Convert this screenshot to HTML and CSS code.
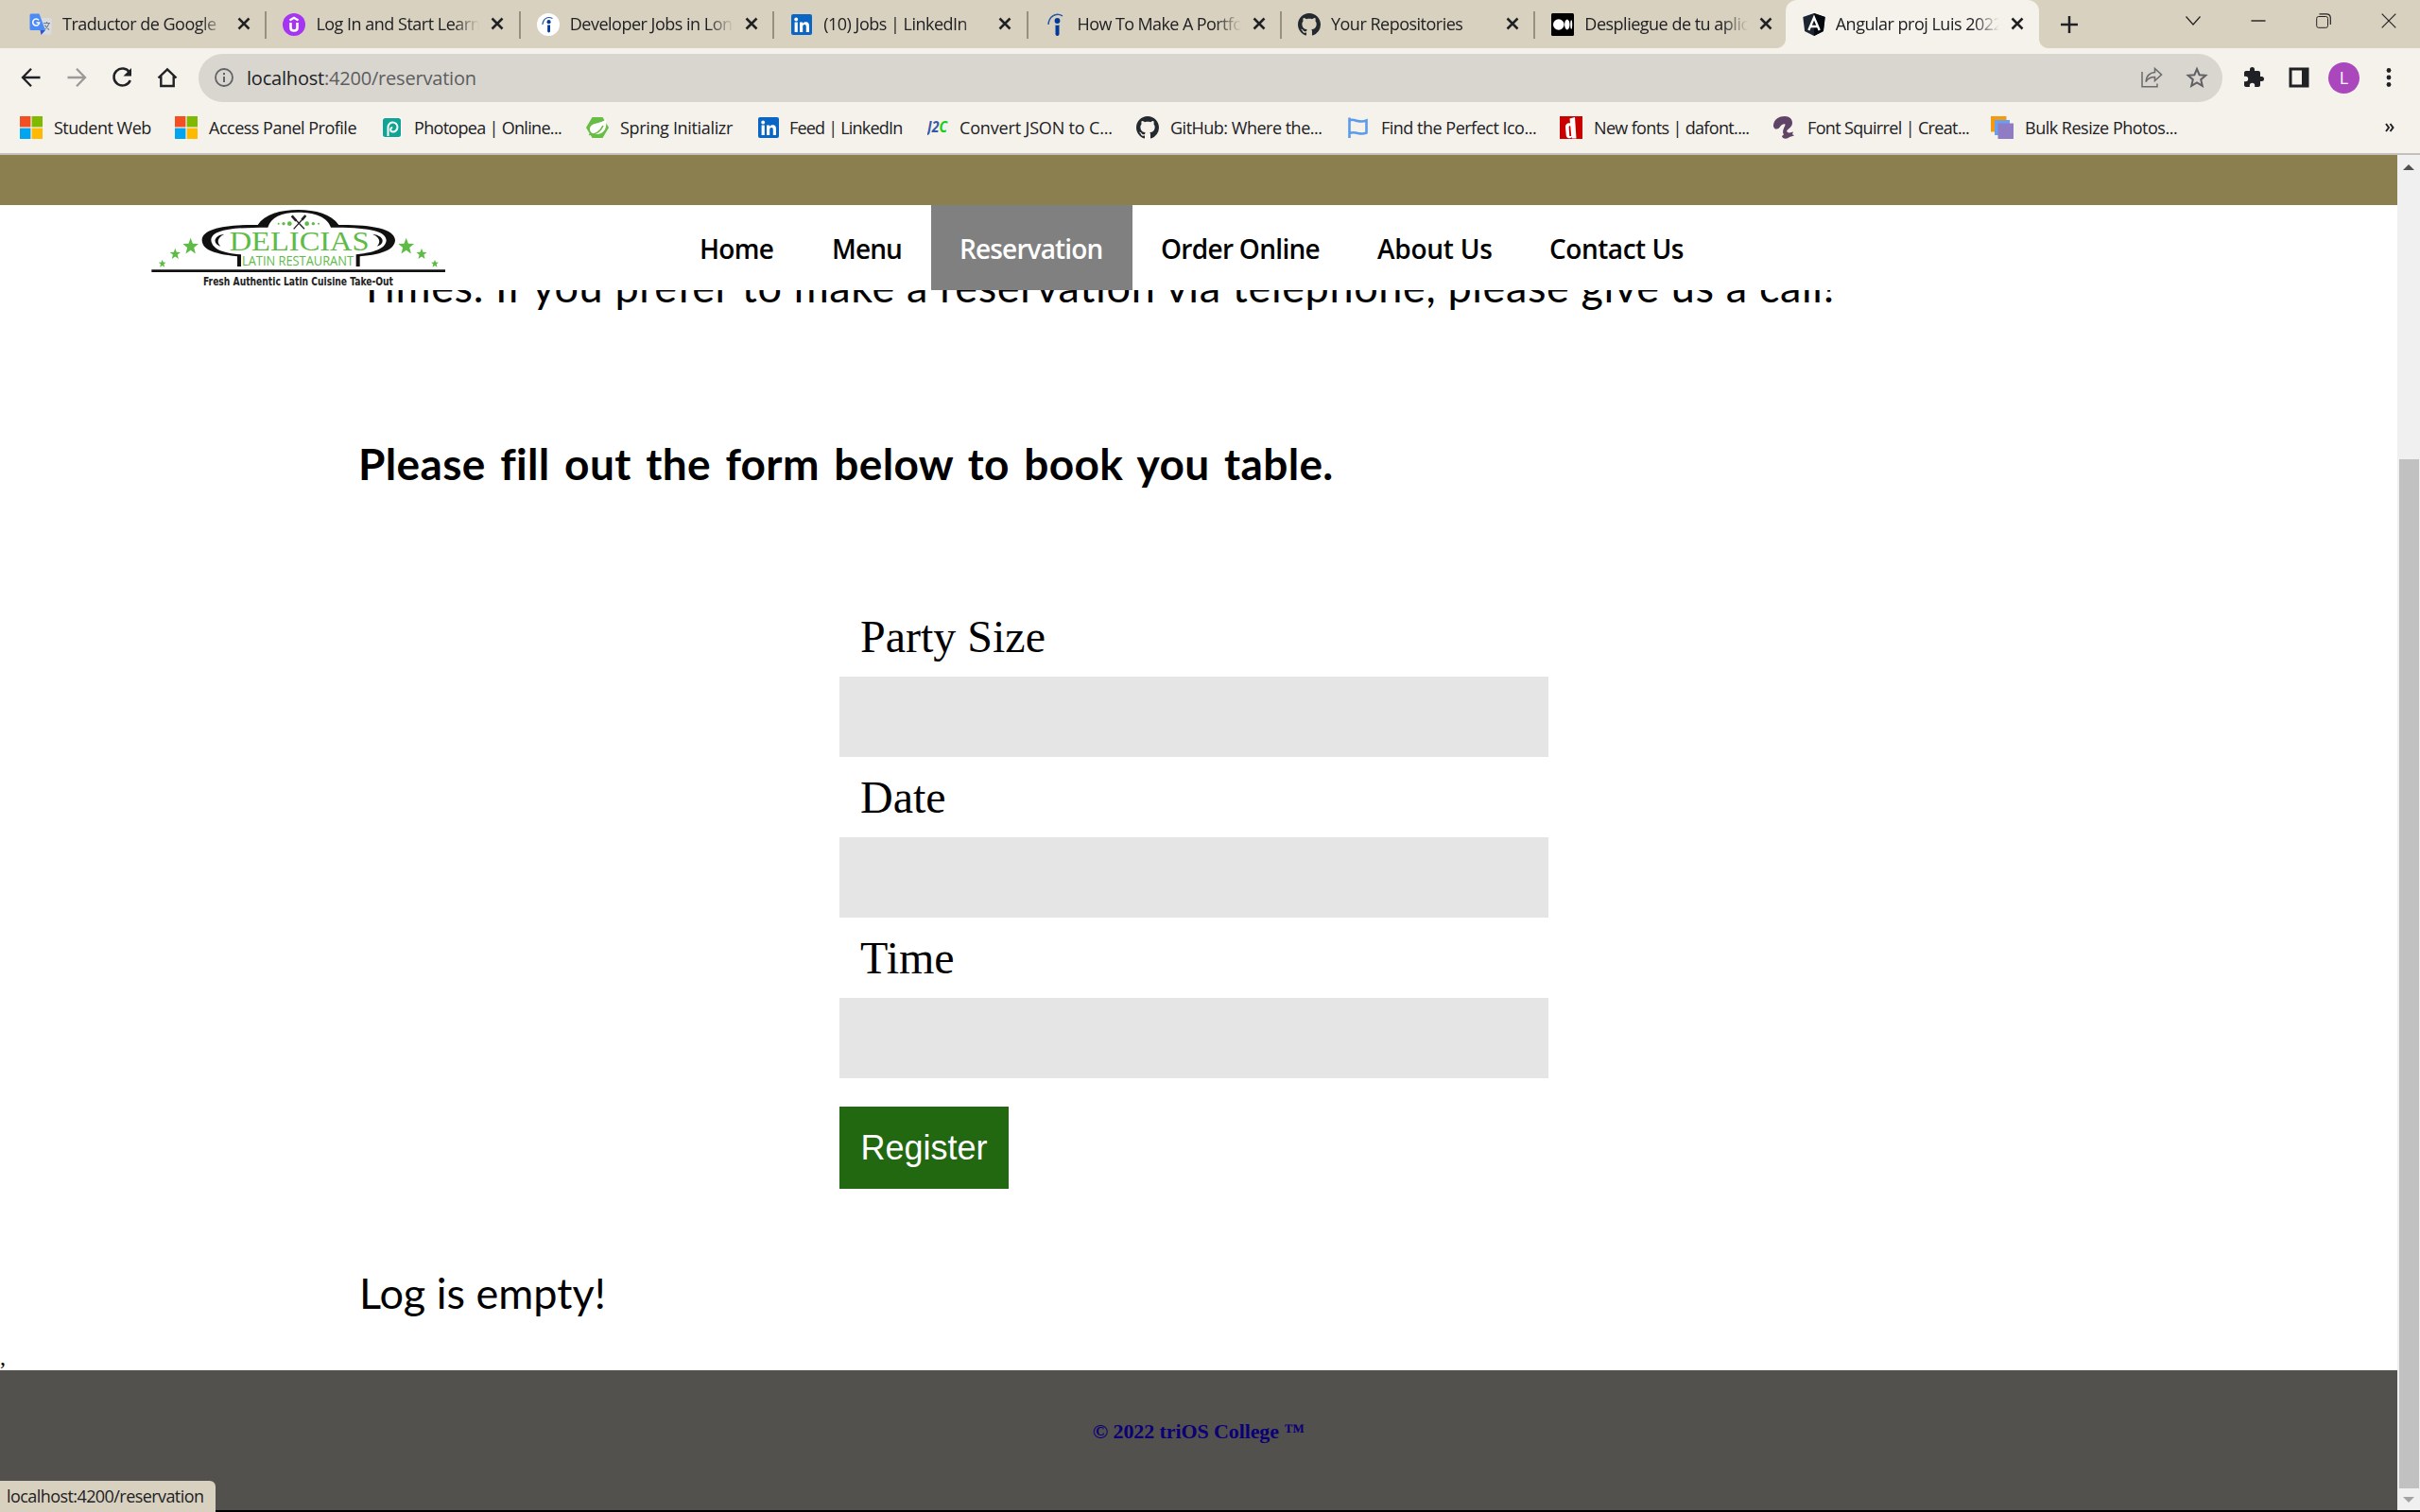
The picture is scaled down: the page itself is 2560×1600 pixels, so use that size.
FILE: index.html
```html
<!DOCTYPE html>
<html lang="en">
<head>
<meta charset="utf-8">
<title>Angular proj Luis 2022</title>
<link rel="stylesheet" href="styles.css">
</head>
<body>
<svg class="defs" aria-hidden="true">
  <symbol id="close" viewBox="0 0 14 14"><path d="M1.500 1.500l11 11M12.500 1.500l-11 11" stroke="#202124" stroke-width="2.500" fill="none"/></symbol>
  <symbol id="linkedin" viewBox="0 0 24 24"><rect x="1" y="1" width="22" height="22" rx="2" fill="#0a66c2"/><circle cx="6.200" cy="6.500" r="1.900" fill="#fff"/><path d="M4.600 9.600h3.200V20H4.600zM10 9.600h3v1.500c.7-1.200 1.900-1.800 3.300-1.800 3 0 3.700 2 3.700 4.700v6h-3.200v-5.300c0-1.400-.1-2.700-1.700-2.700s-1.900 1.200-1.900 2.600V20H10z" fill="#fff"/></symbol>
  <symbol id="github" viewBox="0 0 16 16"><path fill="#24292f" d="M8 0C3.580 0 0 3.580 0 8c0 3.540 2.290 6.530 5.470 7.590.4.070.55-.17.55-.38 0-.19-.01-.82-.01-1.490-2.010.37-2.530-.49-2.690-.94-.09-.23-.48-.94-.82-1.130-.28-.15-.68-.52-.01-.53.63-.01 1.080.58 1.230.82.72 1.210 1.870.87 2.330.66.07-.52.28-.87.51-1.070-1.780-.2-3.640-.89-3.640-3.950 0-.87.31-1.590.82-2.150-.08-.2-.36-1.020.08-2.120 0 0 .67-.21 2.200.82.64-.18 1.320-.27 2-.27s1.360.09 2 .27c1.530-1.040 2.200-.82 2.200-.82.44 1.100.16 1.920.08 2.120.51.56.82 1.270.82 2.150 0 3.070-1.870 3.750-3.650 3.950.29.25.54.73.54 1.480 0 1.070-.01 1.930-.01 2.200 0 .21.15.46.55.38A8.010 8.010 0 0 0 16 8c0-4.420-3.580-8-8-8z"/></symbol>
  <symbol id="indeed" viewBox="0 0 24 24"><circle cx="13.500" cy="8" r="2.900" fill="#003a9b"/><path d="M11.500 12.400c1.400.5 2.700.4 4-.2V22c0 2.500-4 2.500-4 0z" fill="#003a9b"/><path d="M4 12C4.500 4.500 11-1.500 19 2.800" stroke="#2557a7" stroke-width="1.500" fill="none"/></symbol>
  <symbol id="microsoft" viewBox="0 0 24 24"><path fill="#f25022" d="M0 0h11.400v11.400H0z"/><path fill="#7fba00" d="M12.600 0H24v11.400H12.600z"/><path fill="#00a4ef" d="M0 12.600h11.400V24H0z"/><path fill="#ffb900" d="M12.600 12.600H24V24H12.600z"/></symbol>
  <symbol id="star5" viewBox="0 0 24 24"><path fill="#5dbb46" d="M12 0l3.200 8.500 8.800.5-6.900 5.600L19.500 24 12 18.700 4.500 24l2.400-9.400L0 9l8.800-.5z"/></symbol>
</svg>

<div class="browser">
  <header class="tabs">
    <div class="tab">
      <svg class="fav" viewBox="0 0 24 24"><path d="M9 5h13q1.500 0 1.500 1.500V21q0 1.500-1.500 1.500h-9z" fill="#d8dce0"/><path d="M2 .5h8.500L17 18H2Q.5 18 .5 16.500V2Q.5.5 2 .5z" fill="#4a8bf5"/><path d="M11.500 18H17l-4.500 5z" fill="#2f56c8"/><path d="M10 7.400A3.500 3.500 0 1 0 10.700 10H7.500" stroke="#fff" stroke-width="1.500" fill="none"/><path d="M15 10.500h7M18.500 9v1.500M20.800 10.500c-.6 3-2.300 5-4.300 6.500M16.500 12.500c1 2 2.500 3.500 4.500 5" stroke="#6f7f8c" stroke-width="1.200" fill="none"/></svg>
      <span class="label">Traductor de Google</span><svg class="x"><use href="#close"/></svg><i class="sep"></i>
    </div>
    <div class="tab">
      <svg class="fav" viewBox="0 0 24 24"><circle cx="12" cy="12" r="12" fill="#a435f0"/><path d="M7.500 7.500L12 4.800l4.500 2.700" stroke="#fff" stroke-width="2.200" fill="none"/><path d="M8.500 10v5.500q0 3 3.500 3t3.500-3V10" stroke="#fff" stroke-width="2.600" fill="none"/></svg>
      <span class="label">Log In and Start Learning</span><svg class="x"><use href="#close"/></svg><i class="sep"></i>
    </div>
    <div class="tab">
      <svg class="fav" viewBox="0 0 24 24"><circle cx="12" cy="12" r="12" fill="#fff"/><svg x="3" y="3" width="17" height="18"><use href="#indeed"/></svg></svg>
      <span class="label">Developer Jobs in London</span><svg class="x"><use href="#close"/></svg><i class="sep"></i>
    </div>
    <div class="tab">
      <svg class="fav"><use href="#linkedin"/></svg>
      <span class="label">(10) Jobs | LinkedIn</span><svg class="x"><use href="#close"/></svg><i class="sep"></i>
    </div>
    <div class="tab">
      <svg class="fav"><use href="#indeed"/></svg>
      <span class="label">How To Make A Portfolio</span><svg class="x"><use href="#close"/></svg><i class="sep"></i>
    </div>
    <div class="tab">
      <svg class="fav"><use href="#github"/></svg>
      <span class="label">Your Repositories</span><svg class="x"><use href="#close"/></svg><i class="sep"></i>
    </div>
    <div class="tab">
      <svg class="fav" viewBox="0 0 24 24"><rect width="24" height="24" rx="1.500"/><circle cx="7.800" cy="12" r="5.800" fill="#fff"/><ellipse cx="16.800" cy="12" rx="2.700" ry="5.400" fill="#fff"/><ellipse cx="21.200" cy="12" rx="1" ry="4.800" fill="#fff"/></svg>
      <span class="label">Despliegue de tu aplicación</span><svg class="x"><use href="#close"/></svg>
    </div>
    <div class="tab active">
      <svg class="fav" viewBox="0 0 24 24"><path d="M12 0l11.700 4-1.800 15L12 24 2.100 19 .3 4z" fill="#1d2630"/><path d="M12 0l11.700 4-1.800 15L12 24z" fill="#05080f"/><path d="M6.300 18L12 4.500 17.700 18M8.500 14h7" stroke="#fff" stroke-width="2.300" fill="none"/></svg>
      <span class="label">Angular proj Luis 2022</span><svg class="x"><use href="#close"/></svg>
    </div>
    <svg class="plus" viewBox="0 0 18 18"><path d="M9 0v18M0 9h18" stroke="#202124" stroke-width="2.500"/></svg>
    <div class="window">
      <svg viewBox="0 0 16 16"><path d="M.5 3.500L8 12l7.500-8.500" stroke="#222" stroke-width="1.200" fill="none"/></svg>
      <svg viewBox="0 0 16 16"><path d="M.5 8h15" stroke="#000" stroke-width="1.200"/></svg>
      <svg viewBox="0 0 16 16"><rect x=".7" y="3.500" width="11.800" height="11.800" rx="2" stroke="#222" fill="none"/><path d="M3.500.8H11q4.300 0 4.300 4.300V12" stroke="#222" stroke-width="1.200" fill="none"/></svg>
      <svg viewBox="0 0 16 16"><path d="M.7.700l14.600 14.600M15.300.700L.700 15.300" stroke="#222" stroke-width="1.200"/></svg>
    </div>
  </header>

  <div class="toolbar">
    <div class="navicons">
      <svg viewBox="0 0 24 24"><path d="M21.500 12H3.500M12 2.800L3 12l9 9.200" stroke="#202124" stroke-width="2.300" fill="none"/></svg>
      <svg viewBox="0 0 24 24"><path d="M2.500 12h18M12 2.800l9 9.200-9 9.200" stroke="#9b9a98" stroke-width="2.300" fill="none"/></svg>
      <svg viewBox="0 0 24 24"><path d="M20 6.500A9 9 0 1 0 20.800 15" stroke="#202124" stroke-width="2.500" fill="none"/><path d="M22 2v8.500h-8.500z" fill="#202124"/></svg>
      <svg viewBox="0 0 24 24"><path d="M2.500 12.500L12 3.500l9.500 9M5.300 10.500V21h13.400V10.500" stroke="#202124" stroke-width="2.400" fill="none"/></svg>
    </div>
    <div class="omnibox">
      <svg class="info" viewBox="0 0 20 20"><circle cx="10" cy="10" r="9" stroke="#5f6368" stroke-width="1.800" fill="none"/><path d="M10 9v6M10 5v2.200" stroke="#5f6368" stroke-width="2"/></svg>
      <span class="url"><b>localhost</b>:4200/reservation</span>
      <svg class="share" viewBox="0 0 24 24"><path d="M2 6v15.800h16V18.500" stroke="#6b6b6c" stroke-width="1.500" fill="none"/><path d="M15.500 2.500l7 6.500-7 6.500v-4C10.500 11.500 8 13 6 16.500 6.500 11 9.500 7 15.500 6.500z" stroke="#6b6b6c" stroke-width="1.600" fill="none"/></svg>
      <svg class="star" viewBox="0 0 24 24"><path d="M12 3l2.600 6.200 6.700.6-5.100 4.400 1.600 6.600L12 17.300l-5.800 3.500 1.600-6.600-5.100-4.400 6.700-.6z" stroke="#5f6063" stroke-width="2" fill="none"/></svg>
    </div>
    <div class="actions">
      <svg viewBox="0 0 24 24"><path fill="#202124" d="M20.500 11H19V7c0-1.100-.9-2-2-2h-4V3.500a2.500 2.500 0 0 0-5 0V5H4c-1.100 0-2 .9-2 2v3.800h1.500a2.700 2.700 0 0 1 0 5.400H2V20c0 1.100.9 2 2 2h3.800v-1.500a2.700 2.700 0 0 1 5.400 0V22H17c1.100 0 2-.9 2-2v-4h1.500a2.500 2.500 0 0 0 0-5z"/></svg>
      <svg viewBox="0 0 24 24"><path fill="#202124" fill-rule="evenodd" d="M1.500 1.500h21v21h-21zM4.500 4.500v15h10.500v-15z"/></svg>
      <span class="avatar">L</span>
      <svg viewBox="0 0 24 24" fill="#202124"><circle cx="12" cy="4.500" r="2.400"/><circle cx="12" cy="12" r="2.400"/><circle cx="12" cy="19.500" r="2.400"/></svg>
    </div>
  </div>

  <div class="bookmarks">
    <div class="bm"><svg><use href="#microsoft"/></svg><span>Student Web</span></div>
    <div class="bm"><svg><use href="#microsoft"/></svg><span>Access Panel Profile</span></div>
    <div class="bm"><svg viewBox="0 0 24 24"><rect x="0" y="1" width="21" height="22" rx="3" fill="#fff"/><rect x="1" y="2" width="19" height="20" rx="2.500" fill="#0ea594"/><path d="M6.500 21v-9a5 5 0 1 1 5 4.500c-3 0-3-4.500-.3-4.500" stroke="#fff" stroke-width="2" fill="none"/></svg><span>Photopea | Online...</span></div>
    <div class="bm"><svg viewBox="0 0 24 24"><path d="M6.500 1h11L24 12l-6.500 11h-11L0 12z" fill="#68bd45"/><path d="M21 3c1.500 9-1.500 15.500-9 16-5 .2-8-2-8-5.500C4.500 6 16 8.500 21 3z" fill="#fff"/><path d="M3 19.500c7 0 12-3 15-9.500" stroke="#68bd45" stroke-width="1.700" fill="none"/></svg><span>Spring Initializr</span></div>
    <div class="bm"><svg><use href="#linkedin"/></svg><span>Feed | LinkedIn</span></div>
    <div class="bm"><svg viewBox="0 0 24 24"><text x="0" y="17" class="j2c" textLength="21" lengthAdjust="spacingAndGlyphs"><tspan fill="#3558a8">J2</tspan><tspan fill="#12d010">C</tspan></text></svg><span>Convert JSON to C...</span></div>
    <div class="bm"><svg><use href="#github"/></svg><span>GitHub: Where the...</span></div>
    <div class="bm"><svg viewBox="0 0 24 24"><path d="M2.500 1.500V23M2.500 4.500c3.500-2 6 0 8.500.5 3.500.8 6.500.8 9.500-.5v13c-3 1.300-6 1.300-9 .5-3-.9-5.500-1.500-9 0" stroke="#5a9bea" stroke-width="2.600" fill="none"/></svg><span>Find the Perfect Ico...</span></div>
    <div class="bm"><svg viewBox="0 0 24 24"><path fill="#c80000" d="M0 0h24v24H0z"/><path d="M10.500 2.500L16 1l1.500 22.500H13L12.500 22C11.500 24 7 24 6.700 20L6 11C6 8 9 6.500 11 7.500zM9.600 11l.7 10h1.900L11.300 10.500c-.8-.5-1.700-.3-1.700.5z" fill="#fff" fill-rule="evenodd"/></svg><span>New fonts | dafont....</span></div>
    <div class="bm"><svg viewBox="0 0 24 24"><path d="M0 9C1 3 6 0 12 0c5 0 8 3 8 7 0 5-5 6-6 9 1 1 2 1.500 3 1.500l4-1-1 2.500 2 1.500-5 1.500c-3 3-8 1.500-8-1l2-1.500C8 15 13 11 12.500 8.500 11 7.500 8 9 6 12.500 3 15-.5 13 0 9z" fill="#5f4468"/></svg><span>Font Squirrel | Creat...</span></div>
    <div class="bm"><svg viewBox="0 0 24 24"><path fill="#f59b0b" d="M0 0h16.500v16.500H0z"/><path fill="#689ff0" d="M4 4h16v16H4z"/><path fill="#8f7cc4" d="M7.500 7.500H24V24H7.500z"/></svg><span>Bulk Resize Photos...</span></div>
    <svg class="more" viewBox="0 0 10 10"><path d="M1 1l3 4-3 4M5.500 1l3 4-3 4" stroke="#202124" stroke-width="2" fill="none"/></svg>
  </div>

  <div class="viewport">
    <main class="page">
      <div class="topbar"></div>
      <nav class="nav">
        <svg class="logo" viewBox="36 51 960 270">
          <path d="M333 246V214C250 205 222 190 221 162C222 125 300 113 398 114C420 80 470 66 526 66S632 80 655 114C755 113 832 125 834 162C833 190 800 207 722 214V246H710V208C780 200 805 185 806 162C804 130 740 122 630 122C620 90 580 74 526 74S440 90 430 122C315 122 252 130 250 162C252 185 275 203 345 208V246Z" fill="#111"/>
          <path d="M292 143C255 148 255 176 280 182C268 170 268 155 292 143zM762 143C802 148 802 176 776 182C788 170 788 155 762 143z" fill="#111"/>
          <path d="M508 87l38 40M548 87l-36 40" stroke="#222" stroke-width="4"/>
          <path d="M506 85l14 16M538 98l12-14" stroke="#222" stroke-width="8"/>
          <g fill="#5dbb46"><circle cx="464" cy="110" r="3"/><circle cx="480" cy="110" r="5"/><circle cx="499" cy="110" r="7"/><circle cx="554" cy="110" r="7"/><circle cx="574" cy="110" r="5"/><circle cx="591" cy="110" r="3"/></g>
          <text x="308" y="196" class="brand" textLength="444" lengthAdjust="spacingAndGlyphs">DELICIAS</text>
          <text x="348" y="243" class="sub" textLength="354" lengthAdjust="spacingAndGlyphs">LATIN RESTAURANT</text>
          <path d="M61 260H993" stroke="#111" stroke-width="8"/>
          <text x="225" y="306" class="tagline" textLength="603" lengthAdjust="spacingAndGlyphs">Fresh Authentic Latin Cuisine Take-Out</text>
          <use href="#star5" x="160" y="153" width="50" height="55"/><use href="#star5" x="119" y="187" width="34" height="36"/><use href="#star5" x="83" y="223" width="24" height="26"/>
          <use href="#star5" x="844" y="153" width="50" height="55"/><use href="#star5" x="901" y="187" width="34" height="36"/><use href="#star5" x="948" y="223" width="24" height="26"/>
        </svg>
        <div class="links"><a>Home</a><a>Menu</a><a class="current">Reservation</a><a>Order Online</a><a>About Us</a><a>Contact Us</a></div>
      </nav>
      <section class="content">
        <p class="intro">Times. If you prefer to make a reservation via telephone, please give us a call!</p>
        <h2>Please fill out the form below to book you table.</h2>
        <form class="form">
          <label for="size">Party Size</label><input id="size" type="text">
          <label for="date">Date</label><input id="date" type="text">
          <label for="time">Time</label><input id="time" type="text">
          <button type="button">Register</button>
        </form>
        <p class="log">Log is empty!</p>
      </section>
      <div class="stray">,</div>
      <footer>© 2022 triOS College ™</footer>
    </main>
    <aside class="scroll">
      <svg viewBox="0 0 12 6"><path d="M0 6L6 0l6 6z" fill="#505050"/></svg>
      <div class="thumb"></div>
      <svg viewBox="0 0 12 6"><path d="M0 0h12L6 6z" fill="#a3a3a3"/></svg>
    </aside>
  </div>
  <div class="edge"></div>
  <div class="status">localhost:4200/reservation</div>
</div>
</body>
</html>
```
FILE: styles.css
```css
* { box-sizing: border-box; }
body { margin: 0; background: #fff; overflow: hidden; }
.defs { display: none; }
svg { display: block; flex: none; }
.browser { width: 2560px; height: 1600px; display: flex; flex-direction: column; position: relative; font-family: "Open Sans", sans-serif; color: #202124; }

/* tab strip */
.tabs { height: 51px; padding-left: 14px; background: #d9d1bf; display: flex; align-items: center; }
.tab { width: 268.4px; height: 51px; flex: none; padding: 0 0 1px 17px; display: flex; align-items: center; position: relative; }
.fav { width: 24px; height: 24px; margin-top: 2px; }
.label { width: 174px; margin: 0 11px 0 11px; font-size: 18px; letter-spacing: -.5px; white-space: nowrap; overflow: hidden; -webkit-mask-image: linear-gradient(90deg, #000 146px, transparent 173px); mask-image: linear-gradient(90deg, #000 146px, transparent 173px); }
.x { width: 14px; height: 14px; }
.sep { width: 2px; height: 29px; margin-left: auto; margin-top: 2px; background: #97907f; }
.tab.active { margin-left: -4px; padding-left: 18px; background: #f5f1eb; border-radius: 12px 12px 0 0; }
.tab.active::before, .tab.active::after { content: ""; position: absolute; bottom: 0; width: 10px; height: 10px; }
.tab.active::before { left: -10px; background: radial-gradient(circle at 0 0, #d9d1bf 9.5px, #f5f1eb 10.5px); }
.tab.active::after { right: -10px; background: radial-gradient(circle at 100% 0, #d9d1bf 9.5px, #f5f1eb 10.5px); }
.tab:nth-child(5) .label { letter-spacing: -.6px; }
.plus { width: 18px; height: 18px; margin-left: 23px; }
.window { display: flex; gap: 53px; margin-left: auto; padding: 0 25px 8px 0; }
.window svg { width: 16px; height: 16px; }

/* address bar */
.toolbar { height: 62px; background: #f5f1eb; display: flex; align-items: center; padding-left: 21px; }
.navicons { display: flex; gap: 24px; width: 189px; }
.navicons svg, .actions svg { width: 24px; height: 24px; }
.omnibox { width: 2141px; height: 51px; border-radius: 26px; background: #d9d6d0; display: flex; align-items: center; padding: 0 15px 0 17px; }
.info { width: 20px; height: 20px; }
.url { flex: 1; margin-left: 14px; font-size: 20px; letter-spacing: -.2px; color: #5c5d5f; }
.url b { font-weight: 400; color: #202124; }
.share, .star { width: 24px; height: 24px; }
.star { margin-left: 24px; }
.actions { display: flex; align-items: center; gap: 24px; padding-left: 21px; }
.avatar { width: 33px; height: 33px; margin: 0 -5px; border-radius: 50%; background: #ab47bc; color: #fff; font-size: 18px; line-height: 33px; text-align: center; }

/* bookmarks */
.bookmarks { height: 51px; padding: 0 27px 5px 21px; background: #f5f1eb; border-bottom: 2px solid #c3c0bd; display: flex; align-items: center; }
.bm { flex: none; display: flex; align-items: center; font-size: 18px; letter-spacing: -.5px; white-space: nowrap; }
.bm svg { width: 24px; height: 24px; }
.bm span { margin-left: 12px; margin-top: -1px; }
.bm:nth-child(1) { width: 164px; }
.bm:nth-child(2) { width: 219px; }
.bm:nth-child(3) { width: 216px; letter-spacing: -.69px; }
.bm:nth-child(4) { width: 181px; letter-spacing: -.34px; }
.bm:nth-child(5) { width: 180px; letter-spacing: -.8px; }
.bm:nth-child(6) { width: 221px; letter-spacing: -.16px; }
.bm:nth-child(7) { width: 223px; }
.bm:nth-child(8) { width: 225px; }
.bm:nth-child(9) { width: 226px; letter-spacing: -.65px; }
.bm:nth-child(10) { width: 230px; letter-spacing: -.65px; }
.bm:nth-child(3) span, .bm:nth-child(5) span, .bm:nth-child(6) span { margin-left: 10px; }
.j2c { font: italic 700 16px "Open Sans", sans-serif; letter-spacing: 0; }
.more { width: 10px; height: 10px; margin-left: auto; }

/* web page */
.viewport { height: 1434px; display: flex; }
.page { flex: 1; display: flex; flex-direction: column; background: #fff; color: #000; }
.topbar { height: 53px; background: #8b7f50; }
.nav { height: 90px; display: flex; background: #fff; padding-left: 152px; position: relative; z-index: 1; }
.logo { width: 320px; height: 90px; }
.brand { font: 90px "Liberation Serif", serif; fill: #5dbb46; }
.sub { font: 500 43px "Open Sans", sans-serif; fill: #5dbb46; }
.tagline { font: 700 35px "DejaVu Sans Condensed", "DejaVu Sans", sans-serif; fill: #222; }
.links { display: flex; margin-left: 238px; font-size: 28px; font-weight: 600; line-height: 92px; height: 90px; letter-spacing: -.7px; white-space: nowrap; }
.links a { padding-left: 30px; }
.links a:nth-child(1) { width: 140px; }
.links a:nth-child(2) { width: 135px; letter-spacing: -.88px; }
.links a:nth-child(3) { width: 213px; letter-spacing: -.85px; }
.links a:nth-child(4) { width: 229px; }
.links a:nth-child(5) { width: 182px; letter-spacing: -.25px; }
.links a:nth-child(6) { letter-spacing: -.46px; }
.links .current { height: 90px; background: #808080; color: #fff; }

.content { padding-left: 380px; font-family: "Comic Sans MS", "Lato", sans-serif; }
.content p, .content h2 { margin: 0; line-height: 60px; font-size: 45px; white-space: nowrap; }
.content .intro { margin-top: -34px; letter-spacing: .63px; }
.content h2 { margin-top: 128px; margin-left: -1px; font-size: 46px; letter-spacing: .35px; word-spacing: 4px; }
.form { width: 750px; margin: 110px 0 0 508px; font-family: "Liberation Serif", serif; }
.form label { display: block; height: 85px; line-height: 85px; padding-left: 22px; font-size: 48px; }
.form input { display: block; width: 750px; height: 85px; border: 0; padding: 0 22px; background: #e5e5e5; }
.form button { display: block; width: 179px; height: 87px; margin-top: 30px; border: 0; padding: 0; background: #226810; color: #fff; font: 36px "Liberation Sans", sans-serif; }
.content .log { margin-top: 80px; }
.stray { margin-top: auto; height: 27px; font: 24px/27px "Liberation Serif", serif; }
footer { height: 148px; padding-top: 52px; background: #52514d; color: #0b0075; font: 700 22px/25px "Liberation Serif", serif; letter-spacing: -.1px; text-align: center; }

.scroll { width: 24px; background: #f0f0f0; display: flex; flex-direction: column; align-items: center; padding: 10px 0 8px; }
.scroll svg { width: 12px; height: 6px; }
.thumb { width: 21px; height: 1089px; margin: auto 0 9px; background: #c1c1c1; }
.edge { height: 2px; background: #000; }
.status { position: absolute; left: 0; bottom: 0; width: 228px; height: 33px; padding-left: 7px; background: #d9d1bf; border-radius: 0 6px 0 0; font-size: 18px; line-height: 33px; letter-spacing: -.57px; }
```
